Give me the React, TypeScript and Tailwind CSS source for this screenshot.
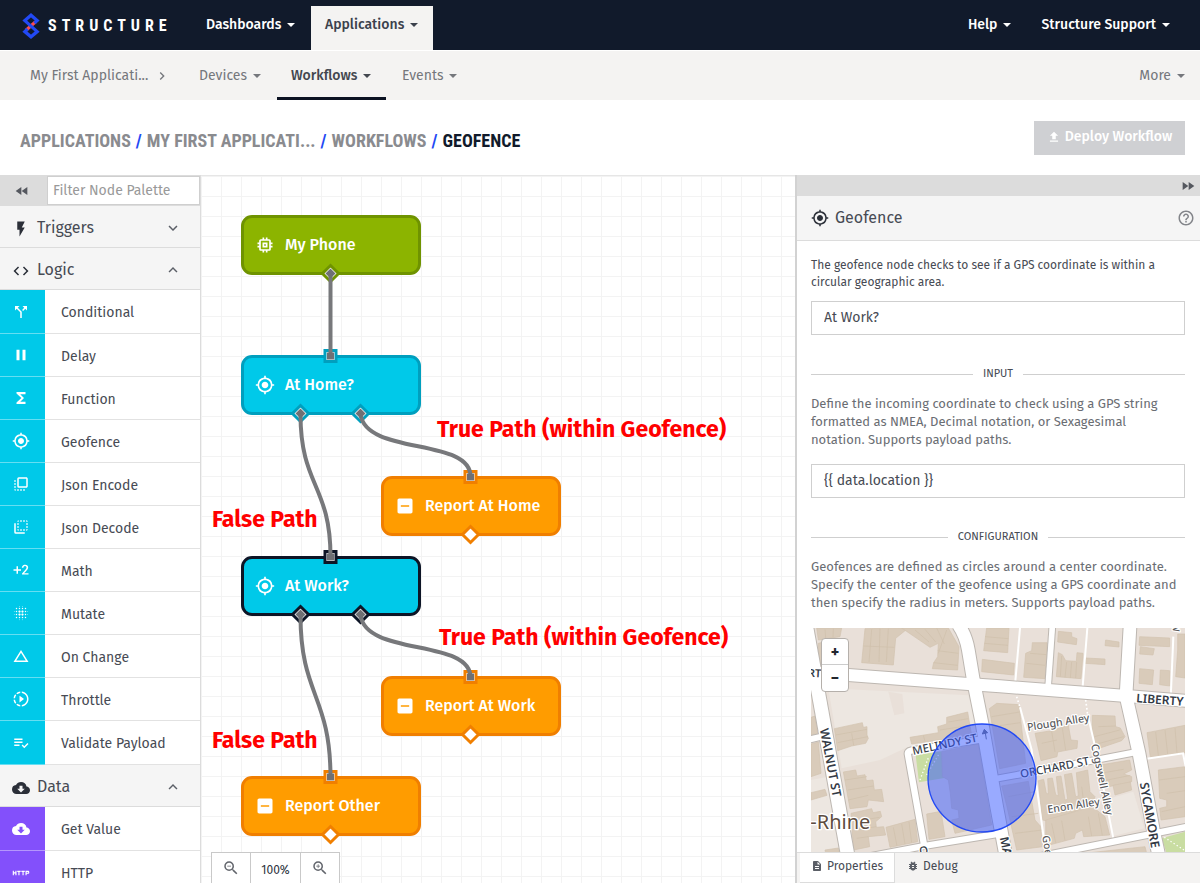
import type { ReactNode } from "react";
import type { IconType } from "react-icons";
import {
  MdBlurOn,
  MdBugReport,
  MdCallSplit,
  MdChangeHistory,
  MdCloudDownload,
  MdCode,
  MdDescription,
  MdExposurePlus2,
  MdFastForward,
  MdFastRewind,
  MdFileUpload,
  MdFlashOn,
  MdFlipToBack,
  MdFlipToFront,
  MdFunctions,
  MdHelpOutline,
  MdHttp,
  MdIndeterminateCheckBox,
  MdKeyboardArrowDown,
  MdKeyboardArrowRight,
  MdKeyboardArrowUp,
  MdMemory,
  MdMyLocation,
  MdPause,
  MdPlaylistAddCheck,
  MdSlowMotionVideo,
  MdZoomIn,
  MdZoomOut,
} from "react-icons/md";

function Caret() {
  return (
    <svg viewBox="0 0 8 4" className="h-1 w-2 shrink-0" fill="currentColor" aria-hidden="true">
      <path d="M0 0h8L4 4z" />
    </svg>
  );
}

function Header() {
  return (
    <header className="flex h-[50px] shrink-0 items-end bg-[#111a2b] text-sm font-medium text-white">
      <a href="#home" className="flex h-full w-[192px] items-center gap-2 pt-0.5 pl-[22px]">
        <svg viewBox="0 0 18 26" className="h-[26px] w-[18px]" fill="none" strokeWidth="3.2" aria-hidden="true">
          <path d="M13.6 8.8L4 17.2" stroke="#ff4b4b" />
          <path d="M12.4 10.2L15.2 7.6L9 2.2L2.8 7.6L15.2 18.6L9 23.8L2.8 18.6L5.6 16" stroke="#2249f4" />
        </svg>
        <span className="font-['Roboto_Condensed',sans-serif] text-base font-bold tracking-[5px]">STRUCTURE</span>
      </a>
      <nav className="flex h-11 items-stretch" aria-label="Main">
        <button className="flex w-[119px] items-center gap-1.5 pb-1.5 pl-3.5">
          Dashboards <Caret />
        </button>
        <button className="flex w-[122px] items-center gap-1.5 bg-[#f4f3f2] pb-1.5 pl-3.5 text-[#3b414c]">
          Applications <Caret />
        </button>
      </nav>
      <nav className="ml-auto flex h-11 items-stretch gap-[30px] pr-[30px]" aria-label="Account">
        <button className="flex items-center gap-1.5 pb-1.5">
          Help <Caret />
        </button>
        <button className="flex items-center gap-1.5 pb-1.5">
          Structure Support <Caret />
        </button>
      </nav>
    </header>
  );
}

function SubNav() {
  return (
    <nav
      className="flex h-[50px] shrink-0 items-stretch border-t border-white bg-[#f4f3f2] pr-[15px] text-sm text-[#75777c]"
      aria-label="Application"
    >
      <a href="#application" className="flex w-[185px] items-center gap-1.5 pl-[30px]">
        My First Applicati... <MdKeyboardArrowRight className="size-4" />
      </a>
      <button className="flex w-[92px] items-center gap-1.5 pl-3.5">
        Devices <Caret />
      </button>
      <button className="flex w-[109px] items-center gap-1.5 border-b-[3px] border-[#0b1222] pt-[3px] pl-3.5 font-medium text-[#43474f]">
        Workflows <Caret />
      </button>
      <button className="flex items-center gap-1.5 pl-4">
        Events <Caret />
      </button>
      <button className="ml-auto flex items-center gap-1.5">
        More <Caret />
      </button>
    </nav>
  );
}

function TitleBar() {
  return (
    <div className="flex h-[75px] shrink-0 items-center justify-between pr-[15px] pl-5">
      <h1 className="flex items-center gap-[5px] pt-1.5 font-['Roboto_Condensed','Liberation_Sans_Narrow',sans-serif] text-lg font-bold text-[#8a8b8f]">
        <a href="#applications">APPLICATIONS</a>
        <span className="text-[#2249f4]">/</span>
        <a href="#application">MY FIRST APPLICATI...</a>
        <span className="text-[#2249f4]">/</span>
        <a href="#workflows">WORKFLOWS</a>
        <span className="text-[#2249f4]">/</span>
        <span className="text-[#111a2b]">GEOFENCE</span>
      </h1>
      <button className="flex h-[34px] w-[151px] items-center justify-center gap-1 bg-[#cfd0d3] pb-0.5 text-sm font-medium text-white">
        <MdFileUpload className="size-3.5" /> Deploy Workflow
      </button>
    </div>
  );
}

type PaletteItem = { name: string; icon: IconType };

const logicItems: PaletteItem[] = [
  { name: "Conditional", icon: MdCallSplit },
  { name: "Delay", icon: MdPause },
  { name: "Function", icon: MdFunctions },
  { name: "Geofence", icon: MdMyLocation },
  { name: "Json Encode", icon: MdFlipToFront },
  { name: "Json Decode", icon: MdFlipToBack },
  { name: "Math", icon: MdExposurePlus2 },
  { name: "Mutate", icon: MdBlurOn },
  { name: "On Change", icon: MdChangeHistory },
  { name: "Throttle", icon: MdSlowMotionVideo },
  { name: "Validate Payload", icon: MdPlaylistAddCheck },
];

const dataItems: PaletteItem[] = [
  { name: "Get Value", icon: MdCloudDownload },
  { name: "HTTP", icon: MdHttp },
];

function PaletteSection({ title, icon: Icon, open }: { title: string; icon: IconType; open: boolean }) {
  const Arrow = open ? MdKeyboardArrowUp : MdKeyboardArrowDown;
  return (
    <button
      aria-expanded={open}
      className="flex h-[42px] w-full shrink-0 items-center border-b border-[#dcdcdc] bg-[#f5f5f5] pt-0.5 pr-[18px] pl-3 text-base text-[#474b54]"
    >
      <Icon className="mt-0.5 size-[18px] text-[#2b2f38]" />
      <span className="ml-[7px]">{title}</span>
      <Arrow className="ml-auto size-[18px] text-[#5b5f67]" />
    </button>
  );
}

function PaletteList({ items, tone }: { items: PaletteItem[]; tone: "logic" | "data" }) {
  const color = tone === "logic" ? "bg-[#00c9e9]" : "bg-[#8350fb]";
  return (
    <ul className="shrink-0">
      {items.map(({ name, icon: Icon }) => (
        <li key={name} className="flex h-[43px] items-stretch first:h-11 last:h-11">
          <div className={`flex w-[45px] items-center justify-center border-b border-white/40 pr-[3px] text-white ${color}`}>
            <Icon className="size-[18px]" />
          </div>
          <div className="flex flex-1 items-center border-b border-[#e2e2e2] pt-[3px] pl-4 text-sm text-[#474b54]">{name}</div>
        </li>
      ))}
    </ul>
  );
}

function Palette() {
  return (
    <aside className="flex w-[201px] shrink-0 flex-col overflow-hidden border-r border-[#dcdcdc]">
      <div className="flex h-[31px] shrink-0 items-stretch bg-[#dcdcdc]">
        <button className="flex w-[47px] items-center justify-center pr-1 text-[#55585f]" aria-label="Collapse palette">
          <MdFastRewind className="size-4" />
        </button>
        <input
          aria-label="Filter Node Palette"
          placeholder="Filter Node Palette"
          className="my-px min-w-0 flex-1 border border-[#cfcfcf] bg-white px-[5px] text-sm placeholder:text-[#999]"
        />
      </div>
      <PaletteSection title="Triggers" icon={MdFlashOn} open={false} />
      <PaletteSection title="Logic" icon={MdCode} open />
      <PaletteList items={logicItems} tone="logic" />
      <PaletteSection title="Data" icon={MdCloudDownload} open />
      <PaletteList items={dataItems} tone="data" />
    </aside>
  );
}

type FlowNode = {
  name: string;
  icon: IconType;
  x: number;
  y: number;
  box: string;
  stroke: string;
  input?: boolean;
  outputs: number[];
  linked: boolean;
};

const nodes: FlowNode[] = [
  { name: "My Phone", icon: MdMemory, x: 40, y: 40, box: "bg-[#8cb400] border-[#6f9300]", stroke: "#6f9300", outputs: [90], linked: true },
  { name: "At Home?", icon: MdMyLocation, x: 40, y: 180, box: "bg-[#00c9e9] border-[#009fbe]", stroke: "#009fbe", input: true, outputs: [60, 120], linked: true },
  { name: "Report At Home", icon: MdIndeterminateCheckBox, x: 180, y: 301, box: "bg-[#ff9c00] border-[#f07f00]", stroke: "#f07f00", input: true, outputs: [90], linked: false },
  { name: "At Work?", icon: MdMyLocation, x: 40, y: 381, box: "bg-[#00c9e9] border-[#0d1526]", stroke: "#0d1526", input: true, outputs: [60, 120], linked: true },
  { name: "Report At Work", icon: MdIndeterminateCheckBox, x: 180, y: 501, box: "bg-[#ff9c00] border-[#f07f00]", stroke: "#f07f00", input: true, outputs: [90], linked: false },
  { name: "Report Other", icon: MdIndeterminateCheckBox, x: 40, y: 601, box: "bg-[#ff9c00] border-[#f07f00]", stroke: "#f07f00", input: true, outputs: [90], linked: false },
];

const wires = [
  "M130 99V181",
  "M100 239C100 310 130 310 130 381",
  "M160 239C166 280 270 262 270 301",
  "M100 440C100 520 130 520 130 602",
  "M160 440C166 481 270 463 270 502",
];

const notes = [
  { text: "True Path (within Geofence)", x: 236, y: 240 },
  { text: "False Path", x: 11, y: 330 },
  { text: "True Path (within Geofence)", x: 238, y: 448 },
  { text: "False Path", x: 11, y: 551 },
];

function Canvas() {
  return (
    <main className="relative min-w-0 flex-1 overflow-hidden border-t border-[#e6e6e6] bg-white bg-[linear-gradient(to_right,#f3f3f3_1px,transparent_1px),linear-gradient(to_bottom,#f3f3f3_1px,transparent_1px)] bg-[size:20px_20px]">
      {nodes.map(({ name, icon: Icon, x, y, box }) => (
        <div
          key={name}
          className={`absolute flex h-[60px] w-[180px] items-center rounded-[11px] border-[3px] pl-[11px] text-base font-medium text-white ${box}`}
          style={{ left: x, top: y - 1 }}
        >
          <Icon className="size-5" />
          <span className="ml-2.5">{name}</span>
        </div>
      ))}
      <svg className="pointer-events-none absolute inset-0 size-full" fill="none" aria-hidden="true">
        <g transform="translate(-0.5 -0.5)">
          {nodes.map((n) => (
            <g key={n.name} stroke={n.stroke} strokeWidth="3" fill="#fff">
              {n.input && <rect x={n.x + 84.5} y={n.y - 5} width="11" height="11" />}
              {n.outputs.map((o) => (
                <path key={o} transform={`translate(${n.x + o} ${n.y + 58})`} d="M0-8L8 0L0 8L-8 0Z" />
              ))}
            </g>
          ))}
          {wires.map((d) => (
            <path key={d} d={d} stroke="#77787b" strokeWidth="4" />
          ))}
          {nodes.map((n) => (
            <g key={n.name} fill="#6f7074">
              {n.input && <rect x={n.x + 86.5} y={n.y - 3} width="7" height="7" />}
              {n.linked &&
                n.outputs.map((o) => (
                  <path key={o} transform={`translate(${n.x + o} ${n.y + 58})`} d="M0-5L5 0L0 5L-5 0Z" />
                ))}
            </g>
          ))}
        </g>
      </svg>
      {notes.map((n) => (
        <p
          key={n.text + n.y}
          className="absolute text-[23px] leading-7 font-bold whitespace-nowrap text-[#ff0000]"
          style={{ left: n.x, top: n.y - 1 }}
        >
          {n.text}
        </p>
      ))}
      <div className="absolute bottom-0 left-2.5 flex h-[31px] items-stretch border border-b-0 border-[#c9c9c9] bg-white text-[#62656c]">
        <button className="flex w-[38px] items-center justify-center" aria-label="Zoom out">
          <MdZoomOut className="size-[18px]" />
        </button>
        <span className="flex w-[51px] items-center justify-center border-x border-[#c9c9c9] pt-1 text-xs text-[#2d3440]">
          100%
        </span>
        <button className="flex w-[38px] items-center justify-center" aria-label="Zoom in">
          <MdZoomIn className="size-[18px]" />
        </button>
      </div>
    </main>
  );
}

const roads: { d: string; w: number }[] = [
  { d: "M5 24L127 700", w: 40 },
  { d: "M10 359L50 350", w: 18 },
  { d: "M460 14C478 40 486 66 490 90L505 180L531 310L575 560L603 710", w: 38 },
  { d: "M10 156L130 165L500 193L585 199L965 228L1150 243", w: 36 },
  { d: "M975 20L963 228L1002 400L1045 630L1060 700", w: 38 },
  { d: "M742 20L729 205", w: 17 },
  { d: "M575 476L700 453L995 396", w: 18 },
  { d: "M545 356L318 392Q306 394 309 405L357 674", w: 19 },
  { d: "M190 710L357 678L588 640", w: 19 },
  { d: "M690 712L1150 620", w: 19 },
];

const alleys = [
  "M645 24L630 195",
  "M847 24L832 212",
  "M1105 50L1097 235",
  "M645 262L680 390L722 696",
  "M848 284L875 400L925 655",
  "M1025 416L1134 400L1142 440",
];

const buildings = [
  "M35 24H110L105 50L40 60Z",
  "M40 70L60 65V150L42 130Z",
  "M180 26L310 24L272 55L265 135L170 128Z",
  "M290 24H430L462 80L458 150L382 146L386 128L398 110L400 70L375 82Z",
  "M545 24H612L608 98L536 92Z",
  "M532 118L628 130L626 165L530 155Z",
  "M88 326L172 308L175 322L186 320V345L190 355L182 370L140 378L98 392Z",
  "M18 292L30 288L38 340L18 345Z",
  "M18 372L40 366L48 460L18 470Z",
  "M18 518L60 508L66 526L18 540Z",
  "M115 456L152 450L156 468L180 464L184 482L204 480L208 510L230 508L236 545L190 540L186 560L135 566Z",
  "M138 580L200 566L204 578L226 574L230 590L212 605L214 622L236 620L242 645L190 650L194 680L146 690Z",
  "M243 622L330 598L338 665L255 682Z",
  "M60 690L100 684L104 700H62Z",
  "M365 582L408 574L420 650L372 658Z",
  "M315 352L400 338L398 320L425 312V292L488 276L492 300L500 345L320 372Z",
  "M410 395L520 372L560 615L450 640L440 600L462 595L460 570L440 565L436 520L430 480L412 470Z",
  "M553 266L575 250L642 254L662 430L584 446Z",
  "M682 68H726V90L720 176L656 172L662 100L680 92Z",
  "M760 34L800 38V50L816 56L814 74L758 66Z",
  "M760 98L772 104L782 122L814 124L816 98L834 100L828 176L754 170Z",
  "M842 114L900 117V134L840 130Z",
  "M902 60L942 66V81L900 77Z",
  "M1004 50L1094 54V80L1002 76Z",
  "M1006 80L1048 86L1044 105L1004 102Z",
  "M1004 146L1046 150L1042 194L1002 190Z",
  "M1066 150L1094 152V198L1064 194Z",
  "M1118 42H1140V174L1112 170L1118 90Z",
  "M862 286L930 288L932 320L946 324L960 350L950 362L874 388L862 340Z",
  "M690 340L740 332L790 316L798 360L818 362L816 385L758 396L756 410L708 422Z",
  "M1026 338L1140 316V398L1036 412Z",
  "M1060 450L1140 440V590L1068 600L1064 565L1085 560V540L1064 535Z",
  "M700 482L716 478L724 520L730 522L728 476L742 474L752 524L760 528L754 470L768 468L780 540L788 538L778 464L800 460L812 530L820 528L814 458L848 450L855 515L870 530L862 552L740 605L712 600Z",
  "M880 436L974 420L980 450L956 462L980 470V485L890 505Z",
  "M924 496L976 486L980 510L930 525Z",
  "M722 600L862 560L900 590L914 645L836 650L832 630L812 640L808 655L722 678Z",
  "M590 498L670 484L690 600L706 618L714 680L635 690L606 560Z",
  "M700 715L1020 680L1025 700Z",
];

const seams = [
  "M60 28L62 54M85 26L84 52M200 28L192 126M225 26L222 126M250 26L244 126M175 78L268 82",
  "M330 30L372 66M360 28L392 66M395 24L418 72M425 30L400 100M398 92L460 100M386 128L458 136",
  "M92 345L186 328M98 368L188 350M140 340L146 376M120 480L186 470M128 510L206 498M130 540L190 526",
  "M145 605L224 592M150 630L214 620M155 655L190 650M265 622L276 678M290 612L300 672M312 606L320 668",
  "M430 306L490 296M405 330L496 316M355 346L360 364M540 50L610 56M538 70L609 76M560 290L644 276M562 320L646 308",
  "M675 100L724 104M664 130L720 136M770 108L766 170M785 126L780 172M800 126L796 174M815 126L812 174",
  "M880 320L932 318M868 350L944 330M876 372L956 350M710 370L756 360M740 334L750 396M772 324L782 390",
  "M1052 336L1060 406M1080 330L1088 402M1110 324L1116 400M1062 480L1140 470M1085 520L1140 512M1070 575L1140 560",
  "M830 500L838 562M885 460L956 448M888 484L976 466",
  "M740 610L752 668M770 602L780 662M850 590L860 648M880 580L892 646M610 530L690 515M620 590L700 580M630 640L712 630",
];

type MapLabel = { text: string; x: number; y: number; angle: number; size: number; color: string; bold?: boolean };

const mapLabels: MapLabel[] = [
  { text: "RT", x: 8, y: 170, angle: 3, size: 33, color: "#333a45", bold: true },
  { text: "WALNUT ST", x: 44, y: 328, angle: 79, size: 37, color: "#333a45", bold: true },
  { text: "MELINDY ST", x: 325, y: 405, angle: -12, size: 34, color: "#383d49" },
  { text: "LIBERTY", x: 993, y: 247, angle: 4, size: 36, color: "#333a45", bold: true },
  { text: "ORCHARD ST", x: 648, y: 474, angle: -11, size: 34, color: "#383d49" },
  { text: "SYCAMORE", x: 1004, y: 490, angle: 80, size: 37, color: "#333a45", bold: true },
  { text: "Plough Alley", x: 668, y: 333, angle: -9, size: 32, color: "#5a5a5c" },
  { text: "Enon Alley", x: 729, y: 580, angle: -9, size: 32, color: "#5a5a5c" },
  { text: "Cogswell Alley", x: 858, y: 374, angle: 78, size: 32, color: "#5a5a5c" },
  { text: "Goethe", x: 712, y: 648, angle: 82, size: 31, color: "#5a5a5c" },
  { text: "MAIN", x: 584, y: 653, angle: 78, size: 36, color: "#333a45", bold: true },
  { text: "O", x: 345, y: 706, angle: -10, size: 34, color: "#383d49" },
  { text: "W", x: 1102, y: 10, angle: 85, size: 28, color: "#5a5a5c" },
];

function MapView() {
  return (
    <div className="relative h-56 w-full overflow-hidden">
      <svg viewBox="18 24 1122 672" preserveAspectRatio="xMidYMid slice" className="size-full font-['Noto_Sans',sans-serif]" role="img" aria-label="Geofence map">
        <rect x="-400" y="-200" width="2400" height="1200" fill="#e9e0d9" />
        <path d="M70 205L490 226L520 330L300 385L225 420L110 445Z" fill="#ede7e1" />
        <path d="M250 215L292 222L298 280L268 286Z" fill="#e9e0d9" />
        <path d="M18 480L70 470L110 696H18Z" fill="#ede7e1" />
        <path d="M898 540L985 515L1018 625L925 648Z" fill="#ede7e1" />
        <path d="M332 406L410 394L418 474L342 487Z" fill="#c9dda2" />
        <path d="M1070 655L1140 635V700H1085Z" fill="#c9dda2" />
        <path d="M345 480L372 408M365 465L402 402M1078 652L1140 692" stroke="#fff" strokeWidth="4" strokeDasharray="4 7" fill="none" />
        {buildings.map((d) => (
          <path key={d} d={d} fill="#d9cbba" stroke="#d1c2af" strokeWidth="2" />
        ))}
        {seams.map((d) => (
          <path key={d} d={d} stroke="#cfbfab" strokeWidth="2" fill="none" />
        ))}
        {alleys.map((d) => (
          <path key={d} d={d} stroke="#fff" strokeWidth="6" fill="none" />
        ))}
        <path d="M635 230L645 262M842 240L848 284" stroke="#fff" strokeWidth="5" strokeDasharray="5 7" fill="none" />
        {roads.map((r) => (
          <path key={r.d} d={r.d} stroke="#bdb7b1" strokeWidth={r.w + 6} fill="none" />
        ))}
        {roads.map((r) => (
          <path key={r.d} d={r.d} stroke="#fff" strokeWidth={r.w} fill="none" />
        ))}
        <path d="M544 358L540 332M532 342L538 328L548 338Z" stroke="#6a7080" strokeWidth="3" fill="#6a7080" />
        {mapLabels.map((l) => (
          <text
            key={l.text}
            transform={`translate(${l.x} ${l.y}) rotate(${l.angle})`}
            fontSize={l.size}
            fontWeight={l.bold ? 600 : 500}
            fill={l.color}
            stroke="#fff"
            strokeWidth="7"
            strokeLinejoin="round"
            paintOrder="stroke"
          >
            {l.text}
          </text>
        ))}
        <text x="16" y="628" fontSize="60" fill="#5d4c40" stroke="#fff" strokeWidth="8" strokeLinejoin="round" paintOrder="stroke">
          -Rhine
        </text>
        <circle cx="531" cy="474" r="162" fill="#3355ff" fillOpacity="0.5" stroke="#2249f4" strokeWidth="4" />
      </svg>
      <div className="absolute top-2.5 left-2.5 flex w-7 flex-col rounded border border-[#b5b0ab] bg-white text-base leading-none font-bold text-[#22262e]">
        <button className="h-[26px] border-b border-[#ccc]" aria-label="Zoom map in">
          +
        </button>
        <button className="h-[26px]" aria-label="Zoom map out">
          −
        </button>
      </div>
    </div>
  );
}

function Legend({ children }: { children: ReactNode }) {
  return (
    <h3 className="flex items-center gap-2.5 text-[11px] leading-4 text-[#474b54] before:h-px before:flex-1 before:bg-[#cfcfcf] after:h-px after:flex-1 after:bg-[#cfcfcf]">
      {children}
    </h3>
  );
}

function PropertiesPanel() {
  return (
    <aside className="flex w-[405px] shrink-0 flex-col overflow-hidden border-l-2 border-[#d2d2d2]">
      <div className="flex h-[21px] shrink-0 items-center justify-end bg-[#dcdcdc] pr-1 text-[#55585f]">
        <button aria-label="Collapse panel">
          <MdFastForward className="size-4" />
        </button>
      </div>
      <div className="flex h-[45px] shrink-0 items-center border-b border-[#dcdcdc] bg-[#f5f5f5] pr-[5px] pl-3.5 text-base text-[#474b54]">
        <MdMyLocation className="size-[18px] text-[#2b2f38]" />
        <h2 className="ml-1.5">Geofence</h2>
        <button className="ml-auto" aria-label="Help">
          <MdHelpOutline className="size-[18px] text-[#83858a]" />
        </button>
      </div>
      <div className="flex min-h-0 flex-1 flex-col overflow-hidden pt-4 pr-[15px] pl-3.5 text-[#474b54]">
        <p className="text-xs leading-[17px]">
          The geofence node checks to see if a GPS coordinate is within a
          <br />
          circular geographic area.
        </p>
        <input
          aria-label="Node name"
          defaultValue="At Work?"
          className="mt-2.5 h-[34px] shrink-0 border border-[#cfcfcf] px-3 pb-0.5 text-sm"
        />
        <div className="mt-[31px]">
          <Legend>INPUT</Legend>
        </div>
        <p className="mt-[13px] text-[13px] leading-[18px] text-[#6a6d73]">
          Define the incoming coordinate to check using a GPS string
          <br />
          formatted as NMEA, Decimal notation, or Sexagesimal
          <br />
          notation. Supports payload paths.
        </p>
        <input
          aria-label="Coordinate"
          defaultValue="{{ data.location }}"
          className="mt-[15px] h-[34px] shrink-0 border border-[#cfcfcf] px-3 pb-0.5 text-sm"
        />
        <div className="mt-[31px]">
          <Legend>CONFIGURATION</Legend>
        </div>
        <p className="mt-[13px] text-[13px] leading-[18px] text-[#6a6d73]">
          Geofences are defined as circles around a center coordinate.
          <br />
          Specify the center of the geofence using a GPS coordinate and
          <br />
          then specify the radius in meters. Supports payload paths.
        </p>
        <div className="mt-4 shrink-0">
          <MapView />
        </div>
      </div>
      <div className="flex h-[31px] shrink-0 items-stretch border-t border-[#dcdcdc] bg-[#f4f3f2] pl-[3px] text-xs text-[#474b54]">
        <button className="flex w-[95px] items-center justify-center gap-1 border-r border-b border-[#dcdcdc] bg-white pb-1">
          <MdDescription className="size-3 text-[#5b5f67]" /> Properties
        </button>
        <button className="flex items-center gap-1 pb-1 pl-3">
          <MdBugReport className="size-3 text-[#5b5f67]" /> Debug
        </button>
      </div>
    </aside>
  );
}

export default function App() {
  return (
    <div className="flex h-screen flex-col overflow-hidden bg-white font-['Fira_Sans','Noto_Sans',sans-serif]">
      <Header />
      <SubNav />
      <TitleBar />
      <div className="flex min-h-0 flex-1">
        <Palette />
        <Canvas />
        <PropertiesPanel />
      </div>
    </div>
  );
}
